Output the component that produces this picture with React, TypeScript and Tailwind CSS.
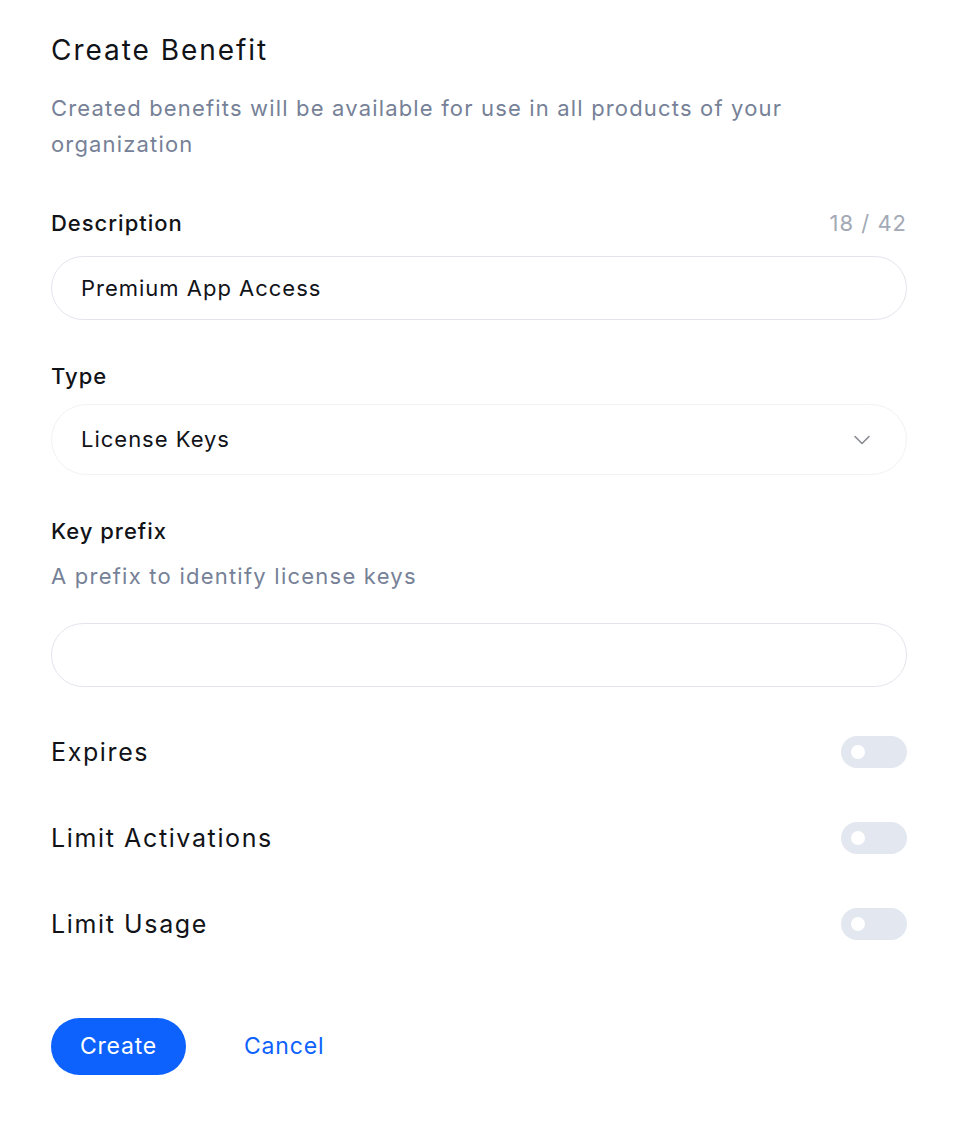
import { ChevronDown } from 'lucide-react';

function Toggle() {
  return (
    <button type="button" className="flex h-[32px] w-[66px] items-center rounded-full bg-[#e3e7ef] px-[10px]">
      <span className="h-[14px] w-[14px] rounded-full bg-white" />
    </button>
  );
}

function ToggleRow({ label }: { label: string }) {
  return (
    <div className="flex items-center justify-between">
      <span className="text-[25px] leading-[32px] tracking-[0.065em] text-[#111318]">{label}</span>
      <Toggle />
    </div>
  );
}

export default function App() {
  return (
    <div className="min-h-screen bg-white font-['Inter','Noto_Sans',sans-serif] text-[#111318] tracking-[0.062em]">
      <div className="pl-[51px] pr-[47px] pt-[30px]">
        {/* Header */}
        <h1 className="text-[28px] leading-[40px] font-normal tracking-[0.07em]">Create Benefit</h1>
        <p className="mt-[20px] text-[22px] leading-[36px] text-[#768197] tracking-[0.053em] pr-[60px]">
          Created benefits will be available for use in all products of your organization
        </p>

        {/* Description */}
        <div className="mt-[46px]">
          <div className="flex items-center justify-between">
            <label className="text-[22px] leading-[30px] font-medium">Description</label>
            <span className="text-[22px] leading-[30px] text-[#a3a9b5]">18 / 42</span>
          </div>
          <div className="mt-[18px] flex h-[64px] items-center rounded-full border border-[#e3e5ec] px-[29px]">
            <span className="text-[22px]">Premium App Access</span>
          </div>
        </div>

        {/* Type */}
        <div className="mt-[41px]">
          <label className="text-[22px] leading-[30px] font-medium">Type</label>
          <div className="mt-[13px] flex h-[71px] items-center justify-between rounded-full border border-[#f1f2f5] pl-[29px] pr-[30px]">
            <span className="text-[22px]">License Keys</span>
            <ChevronDown className="h-[28px] w-[28px] text-[#85888f]" strokeWidth={1.3} />
          </div>
        </div>

        {/* Key prefix */}
        <div className="mt-[41px]">
          <label className="block text-[22px] leading-[30px] font-medium">Key prefix</label>
          <p className="mt-[15px] text-[22px] leading-[30px] text-[#768197] tracking-[0.056em]">A prefix to identify license keys</p>
          <div className="mt-[32px] h-[64px] rounded-full border border-[#e3e5ec]" />
        </div>

        {/* Toggles */}
        <div className="mt-[49px] flex flex-col gap-[54px]">
          <ToggleRow label="Expires" />
          <ToggleRow label="Limit Activations" />
          <ToggleRow label="Limit Usage" />
        </div>

        {/* Actions */}
        <div className="mt-[78px] flex items-center gap-[58px]">
          <button type="button" className="h-[57px] w-[135px] rounded-full bg-[#0d62fe] text-[23px] tracking-[0.035em] text-white">
            Create
          </button>
          <button type="button" className="text-[23px] tracking-[0.035em] text-[#0d62fe]">Cancel</button>
        </div>
      </div>
    </div>
  );
}
